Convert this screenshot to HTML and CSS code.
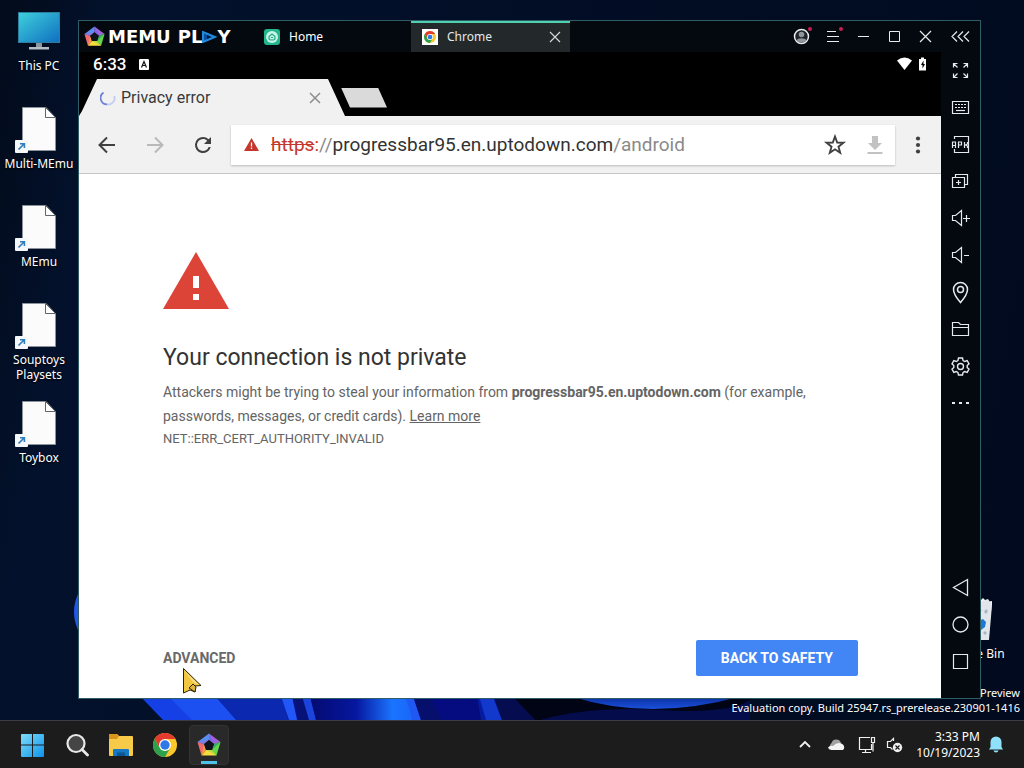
FILE: index.html
```html
<!DOCTYPE html>
<html lang="en">
<head>
<meta charset="utf-8">
<title>Desktop</title>
<link rel="stylesheet" href="styles.css">
</head>
<body>
<svg class="defs" width="0" height="0" aria-hidden="true">
  <defs>
    <linearGradient id="screen" x1="0" y1="0" x2="1" y2="1"><stop offset="0" stop-color="#3fd0dc"/><stop offset="1" stop-color="#0f6fc0"/></linearGradient>
    <linearGradient id="win" x1="0" y1="0" x2="1" y2="1"><stop offset="0" stop-color="#7fdcfa"/><stop offset="1" stop-color="#0d93ea"/></linearGradient>
    <linearGradient id="petal" x1="0" y1="0" x2="1" y2="0"><stop offset="0" stop-color="#040a70"/><stop offset=".45" stop-color="#0617a0"/><stop offset=".8" stop-color="#1a74ff"/><stop offset="1" stop-color="#1a66f8"/></linearGradient>
    <linearGradient id="bow" x1="0" y1="0" x2="0" y2="1"><stop offset="0" stop-color="#0b2c9c"/><stop offset="1" stop-color="#1a50dc"/></linearGradient>
    <symbol id="doc" viewBox="0 0 48 44">
      <path d="M7.500 .5H31l9.500 10V43.500H7.500z" fill="#fbfbfb" stroke="#8b9299"/>
      <path d="M30.500 .5v10h10z" fill="#fff" stroke="#5c646c"/>
    </symbol>
    <symbol id="shortcut" viewBox="0 0 13 13">
      <rect width="13" height="13" rx="1" fill="#f5f8fb"/>
      <path d="M3.500 9.500 9 4M5 3.700h4.400V8" fill="none" stroke="#2f7dbd" stroke-width="1.600"/>
    </symbol>
    <symbol id="memu" viewBox="0 0 24 24">
      <path d="M12 .5 23.500 9 17 11 12 7z" fill="#a062dc"/>
      <path d="M23.500 9 19.500 22.500 15 17 17 11z" fill="#62d84a"/>
      <path d="M19.500 22.500H4.500L9 17h6z" fill="#f6dc3e"/>
      <path d="M4.500 22.500.5 9 7 11l2 6z" fill="#ee6a6c"/>
      <path d="M.5 9 12 .5V7l-5 4z" fill="#5b8df0"/>
      <path d="M12 .5 17 11l-5-4z" fill="#7568e6"/>
      <path d="M23.500 9 15 17l2-6z" fill="#3aa86a"/>
      <path d="M19.500 22.500 9 17h6z" fill="#b8dc40"/>
      <path d="M4.500 22.500 7 11l2 6z" fill="#f39a45"/>
      <path d="M.5 9 12 7l-5 4z" fill="#8a78d8"/>
      <path d="m12 7 5 4-2 6H9l-2-6z" fill="#10131c"/>
    </symbol>
    <symbol id="chrome" viewBox="0 0 24 24">
      <circle cx="12" cy="12" r="12" fill="#fbc72c"/>
      <path d="M1.600 6A12 12 0 0 1 22.400 6H12L6.800 15z" fill="#e33b2e"/>
      <path d="M1.600 6A12 12 0 0 0 12 24L17.200 15 12 18 6.800 15z" fill="#2da14c"/>
      <circle cx="12" cy="12" r="6" fill="#fff"/><circle cx="12" cy="12" r="4.700" fill="#2f78e6"/>
    </symbol>
  </defs>
</svg>

<main class="desktop">
  <svg class="wallpaper" viewBox="0 0 1024 720" preserveAspectRatio="none" aria-hidden="true">
    <path d="M80 590Q68 612 80 634z" fill="#2456e8"/>
    <path d="M140 696H620L560 720H166z" fill="#061ba0"/>
    <path d="M140 696H176L205 720H163z" fill="#1540e6"/>
    <path d="M168 696H215L237 720H192z" fill="#1d50f0"/>
    <path d="M215 696H283L288 720H236z" fill="#0a28b0"/>
    <path d="M281 696H292L297 720H289z" fill="#2256f6"/>
    <path d="M292 696H304L309 720H298z" fill="#061278"/>
    <path d="M302 696H310L316 720H309z" fill="#1a44dc"/>
    <path d="M310 696H407L413 720H316z" fill="url(#petal)"/>
    <path d="M405 696H413L421 720H413z" fill="#2058f4"/>
    <path d="M413 696H477L481 720H421z" fill="#06106c"/>
    <path d="M430 696H477L480 720H442z" fill="#040c80"/>
    <path d="M479 696H493L502 720H486z" fill="#1238cc"/>
    <path d="M493 696H512L535 720H502z" fill="#050c50"/>
    <path d="M512 696H750V720H535z" fill="#010414"/>
    <path d="M540 720Q590 706 660 710T750 700V720z" fill="#050c4c"/>
    <path d="M570 696Q650 722 742 696z" fill="url(#bow)"/>
  </svg>

  <nav class="shortcuts" aria-label="Desktop icons">
    <button class="shortcut"><span class="pic"><svg viewBox="0 0 48 44">
      <rect x="3.500" y="3.500" width="41" height="30" fill="url(#screen)" stroke="#2b7f9e"/><path d="M21 34h6v5h-6z" fill="#8b969e"/><path d="M14 38h20v2.500H14z" fill="#b5bec4"/></svg></span><span>This PC</span></button>
    <button class="shortcut"><span class="pic"><svg><use href="#doc"/></svg><svg class="arrow"><use href="#shortcut"/></svg></span><span>Multi-MEmu</span></button>
    <button class="shortcut"><span class="pic"><svg><use href="#doc"/></svg><svg class="arrow"><use href="#shortcut"/></svg></span><span>MEmu</span></button>
    <button class="shortcut"><span class="pic"><svg><use href="#doc"/></svg><svg class="arrow"><use href="#shortcut"/></svg></span><span>Souptoys Playsets</span></button>
    <button class="shortcut"><span class="pic"><svg><use href="#doc"/></svg><svg class="arrow"><use href="#shortcut"/></svg></span><span>Toybox</span></button>
  </nav>

  <button class="shortcut bin"><span class="pic"><svg viewBox="0 0 48 44">
    <path d="M5 5h38l-4 38H9z" fill="#cfd7de"/><path d="M5 5 12 2l6 3 6-4 6 4 4-4 4 4 5-1v4H5z" fill="#f4f6f8"/>
    <path d="m30 5 9-3 4 6-3 35h-9z" fill="#e2e6ea"/><path d="m29 24 5-2 3 3-1 5-4 3-4-3z" fill="#1b7bd0"/>
    <path d="m37 12 2 2-2 3-2-2zM36 34l2 2-2 2-2-2zM31 11l2 3h-3z" fill="#a7b5c2"/></svg></span><span>Recycle Bin</span></button>

  <p class="watermark">Windows 11 Pro Insider Preview<br>Evaluation copy. Build 25947.rs_prerelease.230901-1416</p>

  <section class="window" aria-label="MEmu Play">
    <div class="emulator">
      <header class="titlebar">
        <div class="brand"><svg class="mark"><use href="#memu"/></svg><span>MEMU</span><span class="play">PL<svg viewBox="0 0 15 12"><path d="M1 1v10l12-5z" fill="#0b4f9c" stroke="#1c8be0" stroke-width="2"/><path d="M5 4v4l4-2z" fill="#06162c"/></svg>Y</span></div>
        <button class="apptab"><svg viewBox="0 0 16 16"><rect width="16" height="16" rx="3" fill="#23b58c"/><circle cx="8" cy="8" r="6" fill="#c9f5e8"/><path d="M5 9.500V7.500L8 5l3 2.500v2c0 1-1 1.500-3 1.500s-3-.5-3-1.500z" fill="none" stroke="#25a884" stroke-width="1.200"/><path d="M7 8.500h2" stroke="#25a884"/></svg><span>Home</span></button>
        <div class="apptab active"><svg viewBox="0 0 16 16"><rect width="16" height="16" fill="#fff"/><svg x="2" y="2" width="12" height="12"><use href="#chrome"/></svg></svg><span>Chrome</span>
          <button class="close" aria-label="Close Chrome"><svg viewBox="0 0 12 12"><path d="m1 1 10 10M11 1 1 11" stroke="#d5dbde" stroke-width="1.100"/></svg></button></div>
        <div class="controls">
          <button aria-label="Account"><svg viewBox="0 0 21 21"><circle cx="10.500" cy="10.500" r="7" fill="#20242a" stroke="#e8ecee" stroke-width="1.500"/><circle cx="10.500" cy="8.500" r="2.800" fill="#8f969b"/><path d="M5.500 14.500c1-3 9-3 10 0a7 7 0 0 1-10 0z" fill="#8f969b"/><circle cx="19" cy="3" r="2" fill="#c81e50"/></svg></button>
          <button aria-label="Menu"><svg viewBox="0 0 21 21"><path d="M5 5.500h9M5 10.500h12M5 15.500h12" stroke="#e8ecee" stroke-width="1.200"/><circle cx="19" cy="3" r="2" fill="#c81e50"/></svg></button>
          <button aria-label="Minimize"><svg viewBox="0 0 21 21"><path d="M5 10.500h11" stroke="#e8ecee"/></svg></button>
          <button aria-label="Maximize"><svg viewBox="0 0 21 21"><path d="M5.500 5.500h10v10h-10z" fill="none" stroke="#e8ecee"/></svg></button>
          <button aria-label="Close"><svg viewBox="0 0 21 21"><path d="m5 5 11 11M16 5 5 16" stroke="#e8ecee" stroke-width="1.200"/></svg></button>
        </div>
      </header>

      <div class="statusbar"><span class="time">6:33</span>
        <svg class="note" viewBox="0 0 10 11"><rect width="10" height="11" rx="1" fill="#fff"/><path d="m2.500 8.500 2.500-6 2.500 6M3.500 6.500h3" fill="none" stroke="#111" stroke-width="1.200"/></svg>
        <svg class="signal" viewBox="0 0 30 14"><path d="M0 3.500Q7.500-2.500 15 3.500L7.500 13z" fill="#fff"/><path d="M22 2h2V.5h3V2h2v11.500h-7z" fill="#fff"/><path d="M26.500 3.500 24 8h1.500v3.500L28 7h-1.500z" fill="#000"/></svg>
      </div>

      <div class="tabstrip">
        <div class="tab"><svg class="spin" viewBox="0 0 16 16"><path d="M3.500 2.500A6.500 6.500 0 0 0 7 14.400" fill="none" stroke="#6d82d8" stroke-width="1.800"/><path d="M7 14.400A6.500 6.500 0 0 0 14.300 6" fill="none" stroke="#c3ccf0" stroke-width="1.800"/></svg><span>Privacy error</span>
          <button class="close" aria-label="Close tab"><svg viewBox="0 0 12 12"><path d="m1 1 10 10M11 1 1 11" stroke="#8d8d8d" stroke-width="1.500"/></svg></button></div>
        <button class="newtab" aria-label="New tab"></button>
      </div>

      <div class="toolbar">
        <button aria-label="Back"><svg viewBox="0 0 24 24"><path d="M20 12H5M12 4.500 4.500 12l7.500 7.500" fill="none" stroke="#404040" stroke-width="2"/></svg></button>
        <button aria-label="Forward"><svg viewBox="0 0 24 24"><path d="M4 12h15M12 4.500l7.500 7.500-7.500 7.500" fill="none" stroke="#b9b9b9" stroke-width="2"/></svg></button>
        <button aria-label="Reload"><svg viewBox="0 0 24 24"><path d="M17.650 6.350A7.960 7.960 0 0 0 12 4a8 8 0 1 0 7.730 10h-2.080A6 6 0 1 1 12 6c1.660 0 3.140.69 4.220 1.780L13 11h7V4z" fill="#404040"/></svg></button>
        <div class="omnibox">
          <svg class="warn" viewBox="0 0 15 13"><path d="M7.500 0 15 13H0z" fill="#c5372c"/><path d="M7.500 4.500v4M7.500 9.500v1.500" stroke="#fff" stroke-width="1.300"/></svg>
          <div class="url" role="textbox" aria-label="Address" contenteditable="true" spellcheck="false"><s>https</s><span class="dim"><span class="colon">:</span>//</span>progressbar95.en.uptodown.com<span class="dim">/android</span></div>
          <button aria-label="Bookmark"><svg viewBox="0 0 24 24"><path d="m12 3.500 2.200 6 6.300.2-5 4 1.700 6.100-5.200-3.500-5.200 3.500 1.700-6.100-5-4 6.300-.2z" fill="none" stroke="#404040" stroke-width="1.900"/></svg></button>
          <button aria-label="Download"><svg viewBox="0 0 24 24"><path d="M19 10h-4V3H9v7H5l7 7zM4.500 19h15v2h-15z" fill="#c2c2c2"/></svg></button>
        </div>
        <button class="more" aria-label="More"><svg viewBox="0 0 24 24"><circle cx="12" cy="5.500" r="2.100"/><circle cx="12" cy="12" r="2.100"/><circle cx="12" cy="18.500" r="2.100"/></svg></button>
      </div>

      <article class="page">
        <div>
          <svg class="alert" viewBox="0 0 66 57"><path d="M33 0 66 57H0z" fill="#db4437"/><path d="M30 24h6v12h-6zM30 42h6v6h-6z" fill="#fff"/></svg>
          <h1>Your connection is not private</h1>
          <p>Attackers might be trying to steal your information from <b>progressbar95.en.uptodown.com</b> (for example, passwords, messages, or credit cards). <a href="#more">Learn more</a></p>
          <p class="code">NET::ERR_CERT_AUTHORITY_INVALID</p>
        </div>
        <div class="actions"><button class="advanced">ADVANCED</button><button class="safety">BACK TO SAFETY</button></div>
      </article>
    </div>

    <aside class="sidebar">
      <button class="collapse" aria-label="Collapse"><svg viewBox="0 0 21 21"><path d="M7 5.500 2 10.500l5 5M13 5.500 8 10.500l5 5M19 5.500l-5 5 5 5"/></svg></button>
      <button aria-label="Full screen"><svg viewBox="0 0 21 21"><path d="M3.500 7.500v-4h4M3.500 3.500l4 4M13.500 3.500h4v4M17.500 3.500l-4 4M3.500 13.500v4h4M3.500 17.500l4-4M13.500 17.500h4v-4M17.500 17.500l-4-4"/></svg></button>
      <button aria-label="Keyboard"><svg viewBox="0 0 21 21"><path d="M2.500 4.500h16v12h-16z"/><path d="M5 7.500h11M5 10.500h11" stroke-dasharray="2 1"/><path d="M6 13.500h9"/></svg></button>
      <button aria-label="Install APK"><svg viewBox="0 0 21 21"><path d="M4.500 5V2.500h14v16h-14V15M2.500 14V8h3v6M2.500 11.500h3M8.500 14V8h3v3h-3M14.500 14V8M17.500 8v2l-2 1 2 1v2"/></svg></button>
      <button aria-label="Multiple instances"><svg viewBox="0 0 21 21"><path d="M5.500 6V3.500h12v10H15M2.500 6.500h12v10h-12zM8.500 9v5M6 11.500h5"/></svg></button>
      <button aria-label="Volume up"><svg viewBox="0 0 21 21"><path d="M2.500 7.500h3l6-5v15l-6-5h-3zM13 10.500h7M16.500 7v7"/></svg></button>
      <button aria-label="Volume down"><svg viewBox="0 0 21 21"><path d="M2.500 7.500h3l6-5v15l-6-5h-3zM14 10.500h5"/></svg></button>
      <button aria-label="Location"><svg viewBox="0 0 21 21"><path d="M10.500 20.500Q3.500 12.500 3.500 7.500a7 7 0 0 1 14 0q0 5-7 13z" stroke-width="1.500"/><circle cx="10.500" cy="7.500" r="3" stroke-width="1.500"/></svg></button>
      <button aria-label="Files"><svg viewBox="0 0 21 21"><path d="M2.500 16.500v-13h6l2 2h8v11zM2.500 8.500h16"/></svg></button>
      <button aria-label="Settings"><svg viewBox="0 0 21 21"><path d="M8.500 2h4l.6 2.600 1.600.9 2.500-.9 1.800 3.200-1.800 1.700v2l1.800 1.700-1.800 3.200-2.500-.9-1.600.9-.6 2.600h-4l-.6-2.600-1.600-.9-2.500.9L2 13.200l1.800-1.700v-2L2 7.800l1.800-3.200 2.500.9 1.600-.9z" stroke-width="1.400"/><circle cx="10.500" cy="10.500" r="3" stroke-width="1.400"/></svg></button>
      <button aria-label="More tools"><svg viewBox="0 0 21 21"><path d="M2 10h3M9 10h3M16 10h3" stroke-width="2"/></svg></button>
      <button class="back" aria-label="Back"><svg viewBox="0 0 21 21"><path d="M17.500 2.500v16l-14-8z" stroke-width="1.300"/></svg></button>
      <button aria-label="Home"><svg viewBox="0 0 21 21"><circle cx="10.500" cy="10.500" r="7.500" stroke-width="1.300"/></svg></button>
      <button aria-label="Recent apps"><svg viewBox="0 0 21 21"><path d="M3.500 3.500h14v14h-14z"/></svg></button>
    </aside>
  </section>

  <svg class="cursor" viewBox="0 0 20 28" aria-hidden="true"><path d="M1.500 1.500 19 18.500 13 19v6l-5-2-6.500 3z" fill="#f1c740" stroke="#2b220a"/><path d="M2.500 4 17 18 11 15z" fill="#fbe08e"/><path d="m7 21 4-4 3 3-1 5z" fill="#e0b43a" stroke="#2b220a"/></svg>
</main>

<footer class="taskbar">
  <nav class="pinned" aria-label="Taskbar">
    <button aria-label="Start"><svg viewBox="0 0 24 24"><path d="M0 2q0-1 1-1h10v10.500H0zM12 1H22q1 0 1 1v9.500H12zM0 12.500h11V24H1q-1 0-1-1zM12 12.500h11V23q0 1-1 1H12z" fill="url(#win)"/></svg></button>
    <button aria-label="Search"><svg viewBox="0 0 24 24"><circle cx="11" cy="10.500" r="8.500" fill="#454545" stroke="#e8e8e8" stroke-width="2.200"/><path d="m17 16.500 5.500 5.500" stroke="#e8e8e8" stroke-width="2.800" stroke-linecap="round"/></svg></button>
    <button aria-label="File Explorer"><svg viewBox="0 0 24 24"><path d="M0 2q0-1 1-1h7l2 2h13q1 0 1 1v18q0 1-1 1H1q-1 0-1-1z" fill="#f8ca4a"/><path d="M0 2q0-1 1-1h7l2 2-2 3H0z" fill="#d9951a"/><path d="M4 23v-6q0-1 1-1h14q1 0 1 1v6z" fill="#1478c4"/><path d="M8 19.500h8V23H8z" fill="#0b5791"/></svg></button>
    <button aria-label="Chrome"><svg><use href="#chrome"/></svg></button>
    <button class="running" aria-label="MEmu"><svg><use href="#memu"/></svg></button>
  </nav>
  <div class="tray">
    <button aria-label="Hidden icons"><svg viewBox="0 0 20 20"><path d="m5 12 5-5 5 5" fill="none" stroke="#f0f0f0" stroke-width="1.800"/></svg></button>
    <button aria-label="OneDrive"><svg viewBox="0 0 20 20"><path d="M5 14a4 4 0 0 1 .5-6A5 5 0 0 1 15 8l-5 6z" fill="#a2a2a2"/><path d="M5.500 15q-3-.3-3.500-2.500 2-2.500 5-1.500Q12 6 17 9.500q2.500 3 0 5.500z" fill="#f4f4f4"/></svg></button>
    <button aria-label="Network"><svg viewBox="0 0 20 20"><path d="M13 2.500H2.500v12h12V9M8.500 15v2.500M5 17.500h9M14.500 2.500h3v5h-3zM16 8v8.500" fill="none" stroke="#f0f0f0" stroke-width="1.200"/></svg></button>
    <button class="sound" aria-label="Volume muted"><svg viewBox="0 0 20 20"><path d="M8.500 6V3.500l-3 3h-3v6h3l2 2" fill="none" stroke="#f0f0f0" stroke-width="1.200"/><circle cx="12.500" cy="12.500" r="4.700" fill="#f0f0f0"/><path d="m10.500 10.500 4 4M14.500 10.500l-4 4" stroke="#1c1c1c" stroke-width="1.200"/></svg></button>
    <button class="clock"><time>3:33 PM</time><time>10/19/2023</time></button>
    <button aria-label="Notifications"><svg viewBox="0 0 20 20"><path d="M4.500 12V7a5.500 5.500 0 0 1 11 0v5l1.500 2.500H3zM7.500 15.500h5q-.5 2-2.500 2t-2.500-2z" fill="#8fe0fa"/></svg></button>
  </div>
</footer>
</body>
</html>
```
FILE: styles.css
```css
* { box-sizing: border-box; }

body {
  margin: 0;
  height: 100vh;
  display: flex;
  flex-direction: column;
  overflow: hidden;
  font: 12px/15px "Noto Sans", sans-serif;
  color: #fff;
  background: #1c1c1c;
}

h1, p { margin: 0; }

button {
  display: flex;
  align-items: center;
  justify-content: center;
  padding: 0;
  border: 0;
  background: none;
  color: inherit;
  font: inherit;
}

svg { display: block; }
.defs { position: absolute; }

/* Desktop */
.desktop {
  position: relative;
  flex: 1;
  min-height: 0;
  overflow: hidden;
  background: linear-gradient(100deg, #020b1a 0, #03112c 10%, #020d24 60%, #010a1e 100%);
}

.wallpaper {
  position: absolute;
  inset: 0;
  width: 100%;
  height: 100%;
}

.shortcuts {
  position: relative;
  display: flex;
  flex-direction: column;
  width: 78px;
  padding-top: 9px;
}

.shortcut {
  height: 98px;
  flex-direction: column;
  justify-content: flex-start;
  gap: 5px;
  text-shadow: 0 1px 2px #000;
}

.pic { position: relative; }
.pic svg { width: 48px; height: 44px; }
.pic .arrow {
  position: absolute;
  left: 0;
  bottom: -2px;
  width: 13px;
  height: 13px;
}

.bin {
  position: absolute;
  right: 12px;
  bottom: 25px;
  width: 78px;
}

.watermark {
  position: absolute;
  right: 4px;
  bottom: 5px;
  font-size: 11px;
  text-align: right;
  white-space: nowrap;
}

.cursor {
  position: absolute;
  left: 182px;
  bottom: 25px;
  width: 20px;
  height: 28px;
}

/* Emulator window */
.window {
  position: absolute;
  inset: 20px 43px 21px 78px;
  display: flex;
  border: 1px solid #2f5d66;
  background: #040910;
}

.emulator {
  flex: 1;
  min-width: 0;
  display: flex;
  flex-direction: column;
}

.titlebar { display: flex; height: 31px; }

.brand {
  display: flex;
  align-items: center;
  gap: 3px;
  width: 176px;
  padding-left: 5px;
  font: bold 18px/20px "DejaVu Sans", sans-serif;
}
.brand .mark { width: 21px; height: 21px; }
.play { display: flex; align-items: center; padding-left: 4px; }
.play svg { width: 15px; height: 12px; }

.apptab {
  display: flex;
  align-items: center;
  justify-content: flex-start;
  gap: 9px;
  width: 156px;
  padding: 0 9px;
}
.apptab > svg { width: 16px; height: 16px; }
.active {
  width: 159px;
  padding: 0 9px 2px 11px;
  border-top: 2px solid #4fd0ae;
  background: #23292b;
  color: #e4e8ea;
}
.close { margin-left: auto; }
.close svg { width: 12px; height: 12px; }

.controls { display: flex; margin-left: auto; }
.controls button { width: 31px; }
.controls svg { width: 21px; height: 21px; }

.statusbar {
  display: flex;
  align-items: center;
  gap: 13px;
  height: 27px;
  padding: 0 14px 3px;
  background: #000;
  font: 500 17px/20px Roboto, sans-serif;
}
.note { width: 10px; height: 11px; }
.signal { width: 30px; height: 14px; margin-left: auto; }

.tabstrip {
  display: flex;
  align-items: center;
  height: 37px;
  background: #000;
}
.tab {
  display: flex;
  align-items: center;
  gap: 5px;
  width: 266px;
  height: 37px;
  padding: 1px 24px 0 21px;
  background: #f1f1f1;
  color: #3a3a3a;
  font: 16px/20px Roboto, sans-serif;
  clip-path: polygon(18px 0, 249px 0, 266px 100%, 0 100%, 3px 32px);
}
.spin { width: 16px; height: 16px; }
.newtab {
  width: 46px;
  height: 20px;
  margin-left: -4px;
  background: #dadada;
  clip-path: polygon(0 0, 37px 0, 100% 100%, 9px 100%);
}

.toolbar {
  display: flex;
  align-items: center;
  height: 58px;
  padding-left: 4px;
  border-bottom: 1px solid #c6c6c6;
  background: #f1f1f1;
}
.toolbar button { width: 48px; height: 40px; }
.toolbar button svg { width: 24px; height: 24px; }
.toolbar .more { width: 46px; fill: #404040; }

.omnibox {
  flex: 1;
  min-width: 0;
  display: flex;
  align-items: center;
  height: 40px;
  margin-left: 4px;
  padding-left: 13px;
  background: #fff;
  box-shadow: 0 1px 2px #bbb;
}
.toolbar .omnibox button { width: 40px; }
.warn { width: 15px; height: 13px; margin-right: 12px; }
.url {
  flex: 1;
  color: #333;
  font: 19px/24px Roboto, sans-serif;
  white-space: nowrap;
}
.url s, .colon { color: #c5372c; }
.dim { color: #8a8a8a; }

.page {
  flex: 1;
  display: flex;
  flex-direction: column;
  justify-content: space-between;
  padding: 78px 83px 22px 84px;
  background: #fff;
  color: #646464;
  font: 14px/24px Roboto, sans-serif;
}
.alert { width: 66px; height: 57px; }
.page h1 {
  margin: 35px 0 8px;
  color: #333;
  font-size: 23px;
  font-weight: 400;
  line-height: 28px;
}
.page a { color: inherit; }
.page .code { font-size: 13px; line-height: 22px; }

.actions {
  display: flex;
  justify-content: space-between;
  align-items: center;
  font-weight: 700;
}
.advanced { color: #696969; }
.safety {
  height: 36px;
  padding: 0 25px;
  border-radius: 2px;
  background: #4285f4;
  color: #fff;
}

.sidebar {
  display: flex;
  flex-direction: column;
  width: 39px;
  padding-bottom: 18px;
}
.sidebar button { height: 37px; }
.sidebar .collapse { height: 31px; }
.sidebar .back { margin-top: auto; }
.sidebar svg {
  width: 21px;
  height: 21px;
  fill: none;
  stroke: #e6eaec;
  stroke-width: 1.2;
  overflow: visible;
}

/* Taskbar */
.taskbar {
  display: flex;
  justify-content: space-between;
  height: 48px;
  padding: 0 13px;
  border-top: 1px solid #3a3d42;
  background: #1c1c1c;
}
.pinned, .tray { display: flex; align-items: center; }
.pinned { gap: 4px; }
.pinned button { width: 40px; height: 40px; }
.pinned svg { width: 24px; height: 24px; }
.pinned .running {
  border: 1px solid #333;
  border-radius: 4px;
  background: linear-gradient(#4cc2e8, #4cc2e8) center bottom / 16px 3px no-repeat #292929;
}

.tray button { width: 31px; height: 40px; }
.tray svg { width: 20px; height: 20px; }
.tray .sound { width: 26px; }
.tray .clock {
  width: auto;
  flex-direction: column;
  align-items: flex-end;
  padding-left: 8px;
  line-height: 16px;
}
```
